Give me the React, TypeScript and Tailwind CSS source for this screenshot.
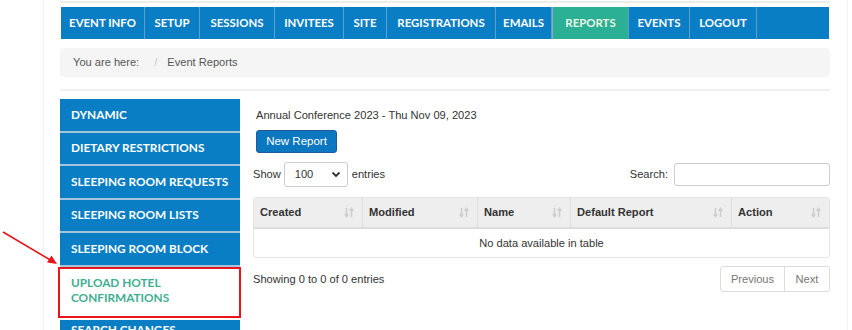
import React from 'react';

const navItems = [
  { label: 'EVENT INFO', w: 'w-[84px]' },
  { label: 'SETUP', w: 'w-[55px]' },
  { label: 'SESSIONS', w: 'w-[75px]' },
  { label: 'INVITEES', w: 'w-[69px]' },
  { label: 'SITE', w: 'w-[43px]' },
  { label: 'REGISTRATIONS', w: 'w-[109px]' },
  { label: 'EMAILS', w: 'w-[56px]' },
  { label: 'REPORTS', w: 'w-[77px]', active: true },
  { label: 'EVENTS', w: 'w-[61px]' },
  { label: 'LOGOUT', w: 'w-[67px]' },
];

const sideItems = [
  'DYNAMIC',
  'DIETARY RESTRICTIONS',
  'SLEEPING ROOM REQUESTS',
  'SLEEPING ROOM LISTS',
  'SLEEPING ROOM BLOCK',
];

const columns = [
  { label: 'Created', w: 'w-[109px]' },
  { label: 'Modified', w: 'w-[115px]' },
  { label: 'Name', w: 'w-[93px]' },
  { label: 'Default Report', w: 'w-[161px]' },
  { label: 'Action', w: 'flex-1' },
];

const SortIcon = () => (
  <svg width="10" height="11" viewBox="0 0 10 11" className="shrink-0">
    <g stroke="#cfcfcf" strokeWidth="1.6" fill="none">
      <path d="M2.5 1v8" />
      <path d="M0.8 7l1.7 2.5L4.2 7" />
      <path d="M7.5 10V2" />
      <path d="M5.8 4L7.5 1.5L9.2 4" />
    </g>
  </svg>
);

export default function App() {
  return (
    <div className="relative w-[852px] h-[330px] overflow-hidden bg-white" style={{ fontFamily: '"Liberation Sans", Arial, sans-serif' }}>
      <div className="ml-[43px] w-[805px] h-[330px] border-l border-r border-[#f2f2f2] pl-[16px] pr-[17px]">
        <div className="h-[3px] border-b-2 border-[#ececec]" />

        {/* top nav */}
        <div className="mt-[4px] ml-px mr-px h-[32px] flex bg-[#0a7ec4]" style={{ fontFamily: 'Lato, sans-serif' }}>
          {navItems.map((n) => (
            <div
              key={n.label}
              className={`${n.w} h-full flex items-center justify-center border-r border-[#5d9fcb] text-[11.4px] font-bold ${
                n.active ? 'bg-[#2bb095] text-[#eaf5e4] border-l border-l-[#8aa6c8]' : 'text-white'
              }`}
            >
              {n.label}
            </div>
          ))}
        </div>

        {/* breadcrumb */}
        <div className="mt-[9px] h-[29px] rounded bg-[#f5f5f5] flex items-center pl-[13px] text-[11.1px] text-[#555]">
          <span>You are here:</span>
          <span className="ml-[15px] mr-[10px] text-[#c8c8c8]">/</span>
          <span>Event Reports</span>
        </div>

        <div className="mt-[12px] h-[2px] bg-[#efefef]" />

        <div className="mt-[8px] flex">
          {/* sidebar */}
          <div className="w-[180px] shrink-0" style={{ fontFamily: 'Lato, sans-serif' }}>
            {sideItems.map((s) => (
              <div key={s} className="h-[33.5px] flex items-center pl-[11px] bg-[#0a7ec4] border-b-2 border-[#a3c4da] text-white text-[11.8px] font-bold">
                {s}
              </div>
            ))}
            <div className="relative h-[53px] bg-white pl-[11px] pt-[8px] text-[11.8px] leading-[15px] font-bold text-[#3fae93]">
              UPLOAD HOTEL
              <br />
              CONFIRMATIONS
              <div className="absolute -left-[2px] -right-[1px] top-0 bottom-[1.5px] border-2 border-[#e8161c]" />
            </div>
            <div className="h-[33px] pl-[11px] pt-[2px] leading-[15px] bg-[#0a7ec4] text-white text-[11.8px] font-bold">
              SEARCH CHANGES
            </div>
          </div>

          {/* main */}
          <div className="ml-[13px] flex-1 text-[11.1px] text-[#333]">
            <div className="mt-[8px] pl-[3px] h-[16px] leading-[16px]">Annual Conference 2023 - Thu Nov 09, 2023</div>
            <div className="mt-[7px] pl-[3px]">
              <button className="w-[81px] h-[23px] rounded-[3px] bg-[#0a77c0] border border-[#20599a] text-white text-[11.5px]">New Report</button>
            </div>

            <div className="mt-[9px] flex items-center justify-between h-[25px]">
              <div className="flex items-center">
                <span>Show</span>
                <div className="ml-[3px] w-[64px] h-[25px] border border-[#cccccc] rounded-[3px] flex items-center justify-between pl-[10px] pr-[6px]">
                  <span>100</span>
                  <svg width="10" height="7" viewBox="0 0 10 7">
                    <path d="M1.5 1.5L5 5l3.5-3.5" stroke="#333" strokeWidth="1.8" fill="none" />
                  </svg>
                </div>
                <span className="ml-[4px]">entries</span>
              </div>
              <div className="flex items-center">
                <span>Search:</span>
                <div className="ml-[6px] w-[156px] h-[23px] border border-[#cccccc] rounded-[3px] bg-white" />
              </div>
            </div>

            {/* table */}
            <div className="mt-[10px] border border-[#e4e4e4] rounded-[3px] overflow-hidden">
              <div className="flex h-[31px] bg-[#eeeeee] border-b-2 border-[#dddddd] font-bold">
                {columns.map((c, i) => (
                  <div
                    key={c.label}
                    className={`${c.w} flex items-center justify-between pl-[6px] pr-[8px] ${i < columns.length - 1 ? 'border-r border-[#dedede]' : ''}`}
                  >
                    <span>{c.label}</span>
                    <SortIcon />
                  </div>
                ))}
              </div>
              <div className="h-[28px] flex items-center justify-center">No data available in table</div>
            </div>

            <div className="mt-[8px] flex items-center justify-between">
              <span>Showing 0 to 0 of 0 entries</span>
              <div className="flex h-[26px] border border-[#dddddd] rounded-[3px] text-[#777]">
                <div className="w-[64px] flex items-center justify-center border-r border-[#dddddd]">Previous</div>
                <div className="w-[44px] flex items-center justify-center">Next</div>
              </div>
            </div>
          </div>
        </div>
      </div>

      {/* annotation arrow */}
      <svg className="absolute left-0 top-[227px]" width="64" height="44" viewBox="0 0 64 44">
        <path d="M3 5L52 34" stroke="#e8161c" strokeWidth="1.6" fill="none" />
        <path d="M57 37L47 35.5L51.5 28.5Z" fill="#e8161c" />
      </svg>
    </div>
  );
}
